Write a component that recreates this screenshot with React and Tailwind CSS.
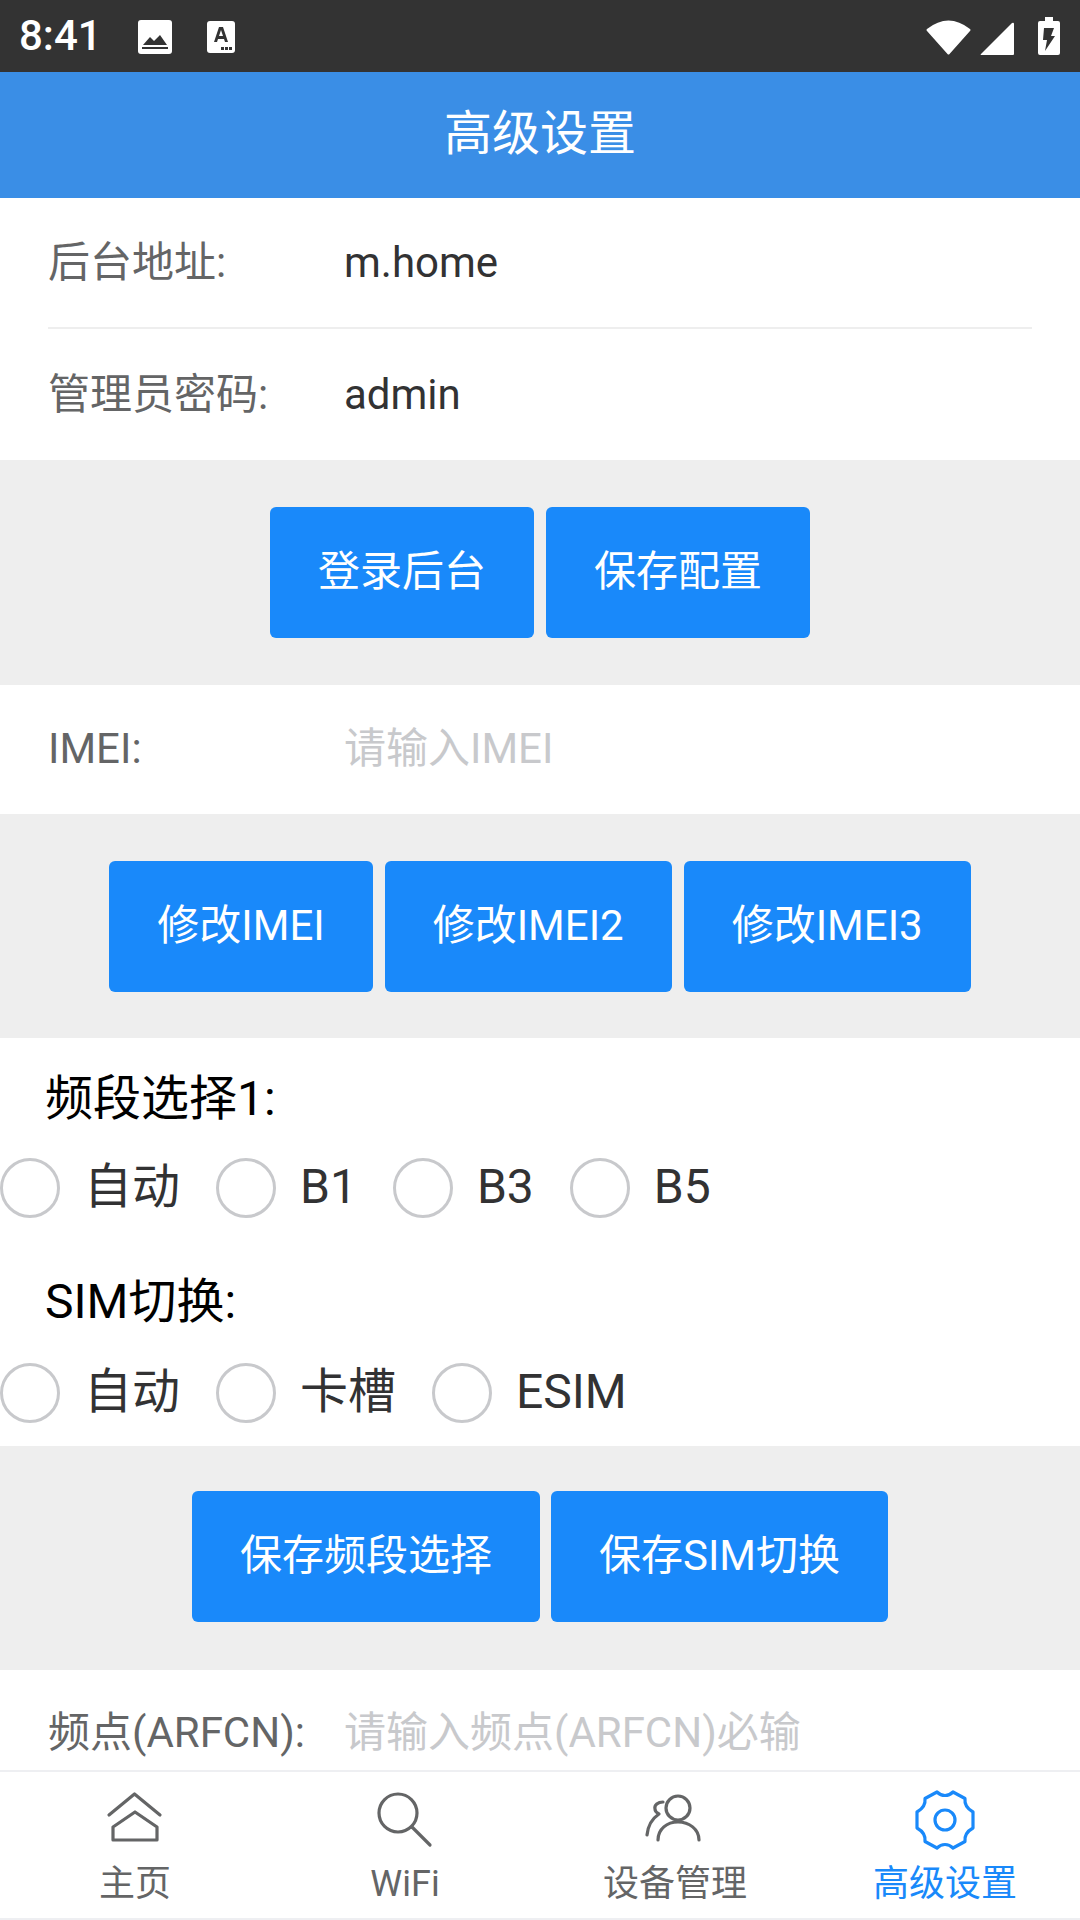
import React from 'react';

const FONT = 'font-["Roboto","Noto_Sans_CJK_SC",sans-serif]';

function StatusBar() {
  return (
    <div className="flex h-[72px] shrink-0 items-center bg-[#333333] text-white">
      <span className="ml-[19px] w-[119px] text-[42px] leading-none font-medium">8:41</span>
      <svg width="34" height="34" viewBox="0 0 34 34" className="mt-[1px]">
        <rect width="34" height="34" rx="3" fill="#fff" />
        <path d="M5 25 L12 17 L16 21 L22 15 L29 25 Z" fill="#333" />
        <rect x="4" y="27" width="26" height="2" fill="#333" />
      </svg>
      <svg width="28" height="32" viewBox="0 0 28 32" className="mt-[1px] ml-[35px]">
        <rect width="28" height="32" rx="3" fill="#fff" />
        <path d="M7 21 L12 6 H16 L21 21 H18 L17 18 H11 L10 21 Z M12 15 H16 L14 9 Z" fill="#333" fillRule="evenodd" />
        <rect x="14" y="26" width="3" height="3" fill="#333" />
        <rect x="18" y="26" width="3" height="3" fill="#333" />
        <rect x="22" y="26" width="3" height="3" fill="#333" />
      </svg>
      <div className="ml-auto flex items-end pr-[20px]">
        <svg width="45" height="36" viewBox="0 0 45 36">
          <path d="M1 10 Q22.5 -7 44 10 Q45 11 44 12 L23.5 35 Q22.5 36 21.5 35 L1 12 Q0 11 1 10 Z" fill="#fff" />
        </svg>
        <svg width="34" height="33" viewBox="0 0 34 33" className="ml-[9px]">
          <path d="M32 1 Q34 0 34 2 V32 Q34 33 33 33 H1 Q0 33 1 32 Z" fill="#fff" />
        </svg>
        <svg width="22" height="38" viewBox="0 0 22 38" className="ml-[24px]">
          <path d="M7 0 H15 V4 H20 Q22 4 22 6 V36 Q22 38 20 38 H2 Q0 38 0 36 V6 Q0 4 2 4 H7 Z" fill="#fff" />
          <path d="M6 11 H16 L13 19 H17 L7 34 L9 23 H5 Z" fill="#333" />
        </svg>
      </div>
    </div>
  );
}

function InfoRow({ label, value, placeholder, className }) {
  return (
    <div className={`flex items-center text-[42px] ${className}`}>
      <span className="w-[296px] shrink-0 whitespace-nowrap text-[#646566]">{label}</span>
      {value ? (
        <span className="text-[#323233]">{value}</span>
      ) : (
        <span className="whitespace-nowrap text-[#c8c9cc]">{placeholder}</span>
      )}
    </div>
  );
}

function ButtonBar({ items, className = 'gap-[12px] py-[47px]' }) {
  return (
    <div className={`flex justify-center bg-[#eeeeee] ${className}`}>
      {items.map((t) => (
        <div key={t} className="flex h-[131px] items-center rounded-[6px] bg-[#1989fa] px-[48px] pb-[3px] text-[42px] text-white">
          {t}
        </div>
      ))}
    </div>
  );
}

function RadioRow({ items }) {
  return (
    <div className="flex gap-[36px]">
      {items.map((t) => (
        <div key={t} className="flex h-[60px] items-center">
          <div className="h-[60px] w-[60px] rounded-full border-[3px] border-[#c8c9cc]" />
          <span className="ml-[24px] pb-[2px] text-[48px] leading-none text-[#323233]">{t}</span>
        </div>
      ))}
    </div>
  );
}

const tabs = [
  {
    label: '主页',
    icon: (
      <>
        <path d="M4 25 L29.5 4 L55 25" />
        <path d="M8 37 L30 22 L52 37 V50 H8 Z" />
      </>
    ),
  },
  {
    label: 'WiFi',
    icon: (
      <>
        <circle cx="23" cy="23" r="19" />
        <path d="M37 37 L55 55" />
      </>
    ),
  },
  {
    label: '设备管理',
    icon: (
      <>
        <circle cx="33" cy="18" r="12" />
        <path d="M13 50 C13 39 22 32 33 32 C44 32 54 39 54 50" />
        <path d="M18 12 C13 12 9 15 10 19 C10 21 12 23 14 24 C8 28 3 35 2 45" />
      </>
    ),
  },
  {
    label: '高级设置',
    active: true,
    icon: (
      <>
        <path d="M30 5.5 Q34.5 5.5 38 2 L50 8.5 Q49 17 58 22 V38 Q49 43 50 51.5 L38 58 Q34.5 54.5 30 54.5 Q25.5 54.5 22 58 L10 51.5 Q11 43 2 38 V22 Q11 17 10 8.5 L22 2 Q25.5 5.5 30 5.5 Z" />
        <circle cx="30" cy="30" r="10" />
      </>
    ),
  },
];

function TabBar() {
  return (
    <div className="grid h-[150px] shrink-0 grid-cols-4 border-t-2 border-b-2 border-[#eeeff2] bg-white">
      {tabs.map((t) => (
        <div key={t.label} className={`flex flex-col items-center pt-[18px] ${t.active ? 'text-[#1989fa]' : 'text-[#646566]'}`}>
          <svg width="60" height="60" viewBox="0 0 60 60" fill="none" stroke="currentColor" strokeWidth="3.2" strokeLinecap="round" strokeLinejoin="round">
            {t.icon}
          </svg>
          <span className="mt-[12px] text-[36px] leading-[44px]">{t.label}</span>
        </div>
      ))}
    </div>
  );
}

export default function App() {
  return (
    <div className={`flex h-[1920px] w-[1080px] flex-col overflow-hidden bg-white ${FONT}`}>
      <StatusBar />
      <div className="flex h-[126px] shrink-0 items-center justify-center bg-[#3a8ee6] pb-[3px] text-[48px] text-white">
        高级设置
      </div>
      <div className="min-h-0 flex-1 overflow-hidden">
        <div className="px-[48px]">
          <InfoRow label="后台地址:" value="m.home" className="h-[131px] border-b-2 border-[#eeeeee]" />
          <InfoRow label="管理员密码:" value="admin" className="h-[131px]" />
        </div>
        <ButtonBar items={['登录后台', '保存配置']} />
        <InfoRow label="IMEI:" placeholder="请输入IMEI" className="h-[129px] px-[48px] pb-[2px]" />
        <ButtonBar items={['修改IMEI', '修改IMEI2', '修改IMEI3']} className="gap-[12px] pt-[47px] pb-[46px]" />
        <div className="pt-[30px] pb-[23px]">
          <div className="h-[60px] pl-[45px] text-[48px] leading-[62px] text-black">频段选择1:</div>
          <div className="mt-[30px]">
            <RadioRow items={['自动', 'B1', 'B3', 'B5']} />
          </div>
          <div className="mt-[52px] h-[60px] pl-[45px] text-[48px] leading-[64px] text-black">SIM切换:</div>
          <div className="mt-[33px]">
            <RadioRow items={['自动', '卡槽', 'ESIM']} />
          </div>
        </div>
        <ButtonBar items={['保存频段选择', '保存SIM切换']} className="gap-[11px] pt-[45px] pb-[48px]" />
        <InfoRow label="频点(ARFCN):" placeholder="请输入频点(ARFCN)必输" className="h-[124px] px-[48px]" />
      </div>
      <TabBar />
    </div>
  );
}
